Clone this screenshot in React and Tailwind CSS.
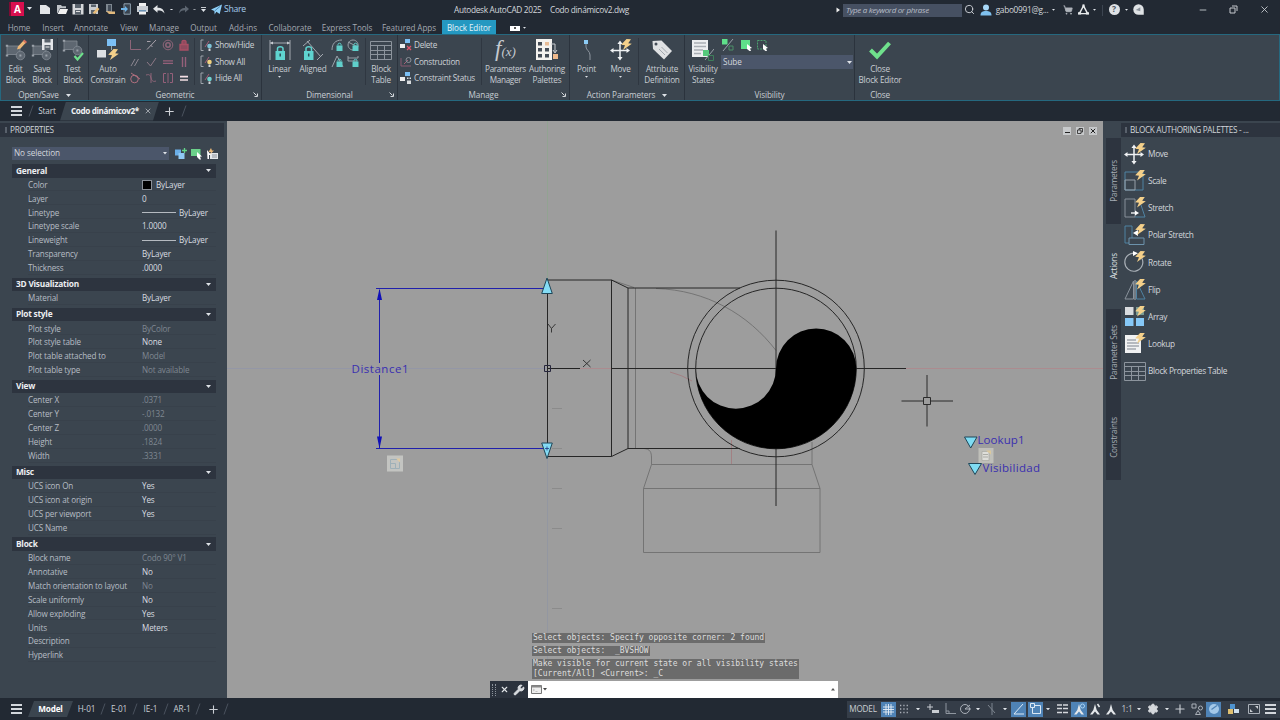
import React from 'react'
import { ShoppingCart, Settings, Search, Wrench, X, Plus, Minus } from 'lucide-react'
import clsx from 'clsx'

const MENU = [
  ["Home", "w-[38px]"],
  ["Insert", "w-[30px]"],
  ["Annotate", "w-[46px]"],
  ["View", "w-[30px]"],
  ["Manage", "w-[40px]"],
  ["Output", "w-[39px]"],
  ["Add-ins", "w-[40px]"],
  ["Collaborate", "w-[54px]"],
  ["Express Tools", "w-[60px]"],
  ["Featured Apps", "w-[64px]"],
];

const SECTIONS = [
  { title: "General", rows: [
    ["Color", "ByLayer", "color"], ["Layer", "0"], ["Linetype", "ByLayer", "line"],
    ["Linetype scale", "1.0000"], ["Lineweight", "ByLayer", "line"],
    ["Transparency", "ByLayer"], ["Thickness", ".0000"],
  ]},
  { title: "3D Visualization", rows: [["Material", "ByLayer"]] },
  { title: "Plot style", rows: [
    ["Plot style", "ByColor", "off"], ["Plot style table", "None"],
    ["Plot table attached to", "Model", "off"], ["Plot table type", "Not available", "off"],
  ]},
  { title: "View", rows: [
    ["Center X", ".0371", "off"], ["Center Y", "-.0132", "off"], ["Center Z", ".0000", "off"],
    ["Height", ".1824", "off"], ["Width", ".3331", "off"],
  ]},
  { title: "Misc", rows: [
    ["UCS icon On", "Yes"], ["UCS icon at origin", "Yes"], ["UCS per viewport", "Yes"], ["UCS Name", ""],
  ]},
  { title: "Block", rows: [
    ["Block name", "Codo 90° V1", "off"], ["Annotative", "No"], ["Match orientation to layout", "No", "off"],
    ["Scale uniformly", "No"], ["Allow exploding", "Yes"], ["Units", "Meters"],
    ["Description", ""], ["Hyperlink", ""],
  ]},
];

// ---------- small helpers ----------
const Cell = ({ className, children }) => (
  <div className={clsx("flex h-full shrink-0 items-center justify-center", className)}>{children}</div>
)

const Arrow = ({ className = "w-[5px]" }) => (
  <svg viewBox="0 0 6 3.6" className={clsx("shrink-0 fill-[#dfe3e8]", className)}><path d="M0 0h6L3 3.6z" /></svg>
)

const Svg = ({ s = 22, v = 22, className, children }) => (
  <svg width={s} height={s} viewBox={`0 0 ${v} ${v}`} className={clsx("shrink-0", className)} fill="none">{children}</svg>
)

const Slash = () => (
  <svg width="6" height="12" viewBox="0 0 6 12" className="shrink-0"><path d="M1 11.5L5 .5" stroke="#4a525e" /></svg>
)

const Burger = ({ className = "w-[11px]" }) => (
  <div className={clsx("flex flex-col gap-[2.5px]", className)}>
    <div className="h-[1.4px] bg-[#d3d7dc]" /><div className="h-[1.4px] bg-[#d3d7dc]" /><div className="h-[1.4px] bg-[#d3d7dc]" />
  </div>
)

const Bolt = ({ x = 0, y = 0 }) => (
  <path transform={`translate(${x} ${y})`} d="M5.5 0L.2 5.8L4 6.200L2 11L10.800 4.800L7.200 4.200L10 .2Z" fill="#f4d08a" />
)

// ---------- title bar ----------
const TitleBar = () => (
  <div className="flex h-[20px] items-center bg-[#222933] text-[#d3d7dc]">
    <Cell className="w-[36px] gap-[3px] pb-[3px] pl-[5px]">
      <div className="flex h-[14px] w-[15px] items-center justify-center border-l-2 border-[#7d0c34] bg-[#d80f4e] text-[10px] font-bold leading-none text-white">A</div>
      <Arrow className="w-[5px]" />
    </Cell>
    <Cell className="w-[18px] pb-[3px]">
      <Svg s={12} v={12}><path d="M1 2h6l4 3v6H1z" fill="#e3e5e8" /></Svg>
    </Cell>
    <Cell className="w-[16px] pb-[3px]">
      <Svg s={12} v={12}><path d="M1 2h4l1 1.3h4v2H4L1.6 10H1z" fill="#bfc3c8" /><path d="M4 6h8l-2 5H1.6z" fill="#f1f1f1" /></Svg>
    </Cell>
    <Cell className="w-[16px] pb-[3px]">
      <Svg s={12} v={12}><path d="M.5 1h11v10.500H.5z" fill="#d6d8db" /><path d="M3 1h6v4H3zM3 7h6v4.500H3z" fill="#59626c" /><path d="M4 8.500h4" stroke="#ddd" /></Svg>
    </Cell>
    <Cell className="w-[16px] pb-[3px]">
      <Svg s={12} v={12}><path d="M1 1h9v10H1z" fill="#c9ccd0" /><path d="M3 1.5h5v2.6H3zM3 7h5v4H3z" fill="#59626c" /><path d="M4.5 10L9.5 4.5l2 1.6L7 11z" fill="#e9bd79" /></Svg>
    </Cell>
    <Cell className="w-[16px] pb-[3px]">
      <Svg s={12} v={12}><path d="M2 1h6v8H2z" fill="#7e8790" /><path d="M4 2h3v6H4z" fill="#444d59" /><path d="M2 8l5 .5h4V11H5z" fill="#e2b97c" /></Svg>
    </Cell>
    <Cell className="w-[16px] pb-[3px]">
      <Svg s={12} v={12}><path d="M4 .8h6.4v10.4H4z" stroke="#8fa0ae" fill="#39434f" /><path d="M1 5h4V3l3 3-3 3V7H1z" fill="#6fb4e8" /></Svg>
    </Cell>
    <Cell className="w-[17px] pb-[3px]">
      <Svg s={13} v={13}><path d="M3 1h7v3H3zM3 9h7v3.4H3z" fill="#f1f1f1" /><path d="M1 4h11v6H1z" fill="#c9ced4" /><path d="M3 8h7v1.4H3z" fill="#6b93b5" /></Svg>
    </Cell>
    <Cell className="w-[15px] pb-px">
      <Svg s={12} v={12}><path d="M0 4.800L4.500 1V3.700c4 0 6.500 1.700 7 5.900C9.800 7 8 6.500 4.500 6.500V8.800z" fill="#e1e4e7" /></Svg>
    </Cell>
    <Cell className="w-[10px] pb-px"><Arrow className="w-[3px]" /></Cell>
    <Cell className="w-[15px] pb-px">
      <Svg s={12} v={12}><path d="M11 5L7 1.600V4C3.500 4 1.500 5.400 1 9.600C2.400 7 4 6.300 7 6.300V8.500z" fill="#5c6570" /></Svg>
    </Cell>
    <Cell className="w-[7px] pb-px"><Arrow className="w-[3px] opacity-60" /></Cell>
    <Cell className="w-[11px] flex-col gap-px pb-px">
      <div className="h-px w-[5px] bg-[#c6cace]" /><Arrow />
    </Cell>
    <Cell className="w-[15px] pb-px">
      <Svg s={11} v={12}><path d="M0 6L12 .5L9.500 11L5.800 8.500L4 11.500L3.600 7.600z" fill="#8fd0f7" /><path d="M4 7.600L10 2.500" stroke="#2c5e86" strokeWidth=".7" /></Svg>
    </Cell>
    <Cell className="w-[22px] text-[8.700px] tracking-[-0.3px] text-[#a5cdee]">Share</Cell>
    <div className="w-[208px]" />
    <div className="w-[96px] whitespace-nowrap text-[8.300px] tracking-[-0.33px]">Autodesk AutoCAD 2025</div>
    <div className="w-[80px] whitespace-nowrap text-[8.300px] tracking-[-0.32px]">Codo dinámicov2.dwg</div>
    <div className="w-[205px]" />
    <Cell className="w-[6px]"><Svg s={6} v={6}><path d="M1.500 .5v5L5 3z" fill="#eee" /></Svg></Cell>
    <div className="w-[2px]" />
    <div className="flex h-[13px] w-[119px] items-center bg-[#465062] pl-[3px] text-[8px] italic tracking-[-0.33px] text-[#b9bec7]">Type a keyword or phrase</div>
    <Cell className="w-[15px] pb-px"><Search size={11} strokeWidth={2} /></Cell>
    <Cell className="w-[18px] pb-px">
      <Svg s={12} v={12}><circle cx="6" cy="3.600" r="3" fill="#a8d8f8" /><path d="M.5 11.500C.5 8 2.500 7 6 7s5.500 1 5.500 4.500z" fill="#7fc0ee" /></Svg>
    </Cell>
    <Cell className="w-[54px] whitespace-nowrap text-[8.300px] tracking-[-0.3px]">gabo0991@g...</Cell>
    <Cell className="w-[9px]"><Arrow className="w-[3px]" /></Cell>
    <Cell className="w-[19px]"><ShoppingCart size={10} fill="#aeb3ba" color="#aeb3ba" /></Cell>
    <Cell className="w-[13px] pb-px">
      <Svg s={11} v={12}><path d="M6 2L1.500 10.500h9z" stroke="#e8eaec" strokeWidth="1.500" /><path d="M4.800 .6h2.400v3H4.800zM0 9h3.400v2.400H0zM8.600 9H12v2.400H8.600z" fill="#e8eaec" /></Svg>
    </Cell>
    <Cell className="w-[9px]"><Arrow className="w-[3px]" /></Cell>
    <Cell className="w-[7px]"><div className="h-[11px] w-px bg-[#3c4450]" /></Cell>
    <Cell className="w-[16px] pb-px">
      <div className="flex size-[11px] items-center justify-center rounded-full bg-[#dfe2e5] text-[8.500px] font-bold leading-none text-[#4c5560]">?</div>
    </Cell>
    <Cell className="w-[8px]"><Arrow className="w-[3px]" /></Cell>
    <Cell className="w-[16px] pb-px">
      <Svg s={11} v={12}><path d="M6 .3a5.700 5.700 0 0 1 5.700 5.700V11.700H6A5.700 5.700 0 0 1 6 .3z" fill="#dfe2e5" /><path d="M3 6.500L8 3.500V8z" fill="#8a929b" /></Svg>
    </Cell>
    <div className="w-[50px]" />
    <Cell className="w-[14px] pb-px"><Minus size={10} /></Cell>
    <Cell className="ml-[16px] w-[14px] pb-px">
      <Svg s={9} v={9}><path d="M1 3h5v5H1z" stroke="#c5c9ce" /><path d="M3 1h5v5" stroke="#c5c9ce" /></Svg>
    </Cell>
    <Cell className="ml-[16px] w-[16px] pb-px"><X size={11} strokeWidth={1.800} /></Cell>
  </div>
)

const MenuTabs = () => (
  <div className="flex h-[14px] items-center bg-[#222933] text-[8.100px] tracking-[-0.07px] text-[#a3a8b0]">
    {MENU.map(([name, w]) => <Cell key={name} className={clsx(w, "whitespace-nowrap pt-[3px]")}>{name}</Cell>)}
    <div className="w-[1px]" />
    <Cell className="w-[54px] whitespace-nowrap bg-[#2498c1] pt-[2px] text-[#e5f3f9]">Block Editor</Cell>
    <div className="ml-[14px] flex items-center gap-[3px] pt-[2px]">
      <div className="flex h-[5px] w-[10px] items-center justify-center bg-white"><div className="size-[2px] bg-[#555]" /></div>
      <Arrow className="w-[3px]" />
    </div>
  </div>
)

// ---------- ribbon ----------
const Panel = ({ className, title, arrow, corner, children }) => (
  <div className={clsx("flex shrink-0 flex-col border-r border-[#2b333d] pt-px", className)}>
    <div className="flex h-[53px] items-start">{children}</div>
    <div className="relative flex h-[11px] items-center justify-center gap-[7px] pt-px text-[8.200px] tracking-[-0.12px] text-[#c8cdd3]">
      {title}
      {arrow && <Arrow className="w-[5px]" />}
      {corner && (
        <Svg s={5} v={5} className="absolute right-[3px] top-[3px]"><path d="M.5 .5l3 3M4.500 1.500v3h-3" stroke="#d5d8dc" /></Svg>
      )}
    </div>
  </div>
)

const Big = ({ className, icon, lines, arrow }) => (
  <div className={clsx("flex shrink-0 flex-col items-center pt-[3px] text-[8.200px] leading-[10.800px] tracking-[-0.2px] text-[#c8cdd3]", className)}>
    {icon}
    <div className="mt-[3px] text-center">
      {lines.map((l) => <div key={l} className="whitespace-nowrap">{l}</div>)}
    </div>
    {arrow && <Arrow className="mt-[1px] w-[3px]" />}
  </div>
)

const Sep = () => <div className="mt-[2px] h-[47px] w-px shrink-0 bg-[#2f3741]" />

const SmallRow = ({ icon, text }) => (
  <div className="flex h-[16.500px] items-center gap-[2px] whitespace-nowrap text-[8.200px] tracking-[-0.28px] text-[#cdd1d7]">{icon}{text}</div>
)

const BlockBase = ({ y = 0 }) => (
  <g transform={`translate(0 ${y})`}>
    <path d="M2 3h13v8.500H2z" fill="#5e6771" stroke="#858d96" strokeWidth=".8" />
    <circle cx="15.500" cy="12.500" r="4.300" fill="#5e6771" stroke="#858d96" strokeWidth=".8" />
    <path d="M.8 11.500h2.400v2H.8zM.8 1.800h2.400v2H.8zM14.400 11.500h2v2h-2z" fill="#9aa1a9" />
  </g>
)

const Grid = () => (
  <Svg><path d="M.5 2.500h21v18H.5zM.5 6.500h21M.5 11.500h21M.5 15.500h21M7.500 6.500v14M14.500 6.500v14" stroke="#8c949d" strokeWidth="1" /></Svg>
)

const MoveIcon = () => (
  <Svg>
    <path d="M10 4v15M2.500 11.500h15" stroke="#f0f2f4" strokeWidth="1.500" />
    <path d="M10 1.500l2.600 3.500H7.400zM10 21.500l2.600-3.500H7.400zM0 11.500L3.500 9v5zM20 11.500L16.500 9v5z" fill="#f0f2f4" />
    <Bolt x={11} y={0} />
  </Svg>
)

const geoIcons = [
  <path d="M1.500 1v9.500H12" stroke="#8d6578" />,
  <path d="M2 10.500L11 1M2 2.500h3.500M5.500 6l2 2" stroke="#a9a2ab" />,
  <g stroke="#8d6578"><circle cx="6" cy="6" r="4.800" /><circle cx="6" cy="6" r="2.200" strokeWidth="1.500" /></g>,
  <path d="M2 5.500h8V11H2zM4 5.500V2.600C4 1 8 1 8 2.600v3" stroke="#a84f64" strokeWidth="1.300" fill="#8f4a5e" />,
  <path d="M2 10l4-7M5.500 10l4-7" stroke="#8d8791" />,
  <path d="M2 6l3.500 4L11 2" stroke="#8d7886" />,
  <path d="M1 4.800h10M1 7.400h10" stroke="#95607a" strokeWidth="1.200" />,
  <path d="M4.500 1v10M7.500 1v10" stroke="#95607a" strokeWidth="1.400" />,
  <g stroke="#b06f7e"><circle cx="5.500" cy="7" r="3.800" /><path d="M2 1l9 6" /></g>,
  <path d="M1 3c4-1 4 0 5 3s2 4 5 3M6 1v10" stroke="#8d6578" />,
  <path d="M4 1.500H1.500v9H4M8 1.500h2.500v9H8M6 1v10" stroke="#95607a" />,
  <path d="M2 4.600h8M2 8h8" stroke="#f3dfe5" strokeWidth="1.700" />,
];

const ShowIcon = ({ c }) => (
  <Svg s={13} v={13}>
    <path d="M3.500 1H1v10.500h2.500" stroke="#a0a6ad" /><path d="M5 8l4-6" stroke="#a65f78" />
    <circle cx="9.500" cy="7" r="2.300" fill={c} /><path d="M8.500 9.500h2v2.500h-2z" fill="#d3d6da" />
  </Svg>
)

const DimLock = ({ d }) => (
  <Svg s={13} v={13}>
    <path d={d} stroke="#9aa1a9" />
    <path d="M5.500 6.500h6V12h-6z" fill="#5fcfcb" /><path d="M7 6.500V5.200c0-1.300 3-1.300 3 0v1.300" stroke="#5fcfcb" />
  </Svg>
)

const Ribbon = () => (
  <div className="flex h-[67px] border border-[#25687f] bg-[#3b454f]">
    <Panel className="w-[88px]" title="Open/Save" arrow>
      <Big className="w-[29px]" lines={["Edit", "Block"]} icon={
        <Svg><BlockBase y={4} /><path d="M12 10.500L13 7.500L18.500 1.500L21 3.500L15.500 9.500z" fill="#eeb878" /><path d="M18 2l1.400-1.400L22 3l-1.400 1.400z" fill="#d6705c" /></Svg>
      } />
      <Big className="w-[24px]" lines={["Save", "Block"]} icon={
        <Svg><BlockBase y={4} /><path d="M11 0h11v11H11z" fill="#e4e6e9" /><path d="M13.500 0h6v3.500h-6zM13.500 6h6v5h-6z" fill="#59626c" /><path d="M14.500 8h4" stroke="#eee" /></Svg>
      } />
      <div className="w-[4px]" />
      <Sep />
      <Big className="w-[30px]" lines={["Test", "Block"]} icon={
        <Svg><BlockBase y={-1} /><path d="M12.500 17l3 3.500L21 14" stroke="#6fe08c" strokeWidth="2.200" /></Svg>
      } />
    </Panel>
    <Panel className="w-[173px]" title="Geometric" corner>
      <Big className="w-[38px]" lines={["Auto", "Constrain"]} icon={
        <Svg><path d="M10 0h9v7h-9z" fill="#7cc0f5" /><path d="M0 11h9v7.500H0z" fill="#dcdfe2" /><Bolt x={11} y={10} /><path d="M14.500 7v4" stroke="#9aa" /></Svg>
      } />
      <div className="grid w-[65px] grid-cols-4 pt-[1px]">
        {geoIcons.map((g, i) => (
          <div key={i} className="flex h-[16.500px] items-center justify-center"><Svg s={12} v={12}>{g}</Svg></div>
        ))}
      </div>
      <div className="w-[2px]" />
      <Sep />
      <div className="flex flex-col pl-[5px] pt-[1px]">
        <SmallRow icon={<ShowIcon c="#7fc5d8" />} text="Show/Hide" />
        <SmallRow icon={<ShowIcon c="#f0d27f" />} text="Show All" />
        <SmallRow icon={<ShowIcon c="#6fd3d0" />} text="Hide All" />
      </div>
    </Panel>
    <Panel className="w-[136px]" title="Dimensional" corner>
      <Big className="w-[35px]" arrow lines={["Linear"]} icon={
        <Svg>
          <path d="M1 1v20M21 1v20M1 4h20" stroke="#a3a9b0" /><path d="M1 4l3-1.500v3zM21 4l-3-1.500v3z" fill="#c9cdd2" />
          <path d="M6.500 12h9.500v9H6.500z" fill="#5fd3cf" /><path d="M8.500 12V9.500c0-2.500 5.500-2.500 5.500 0V12" stroke="#5fd3cf" strokeWidth="1.500" /><path d="M11.200 14.500v3" stroke="#2b4b54" strokeWidth="1.500" />
        </Svg>
      } />
      <Big className="w-[32px]" lines={["Aligned"]} icon={
        <Svg>
          <path d="M1 7l7-6M5 2l14 16M15 21l6-6" stroke="#a3a9b0" />
          <path d="M2 12h9.500v9H2z" fill="#5fd3cf" /><path d="M4 12V9.500c0-2.500 5.500-2.500 5.500 0V12" stroke="#5fd3cf" strokeWidth="1.500" /><path d="M6.700 14.500v3" stroke="#2b4b54" strokeWidth="1.500" />
        </Svg>
      } />
      <div className="grid w-[32px] grid-cols-2 justify-items-center gap-y-[3px] pl-[1px] pt-[3px]">
        <DimLock d="M1 11C1 5 4 1 11 1" />
        <DimLock d="M6 1a5 5 0 1 0 .1 0M1 3l10 5" />
        <DimLock d="M1 12L6 1l6 11" />
        <DimLock d="M1 3h10V1M1 1v5h9" />
      </div>
      <div className="w-[4px]" />
      <Sep />
      <Big className="w-[30px]" lines={["Block", "Table"]} icon={<Grid />} />
    </Panel>
    <Panel className="w-[172px]" title="Manage" corner>
      <div className="flex w-[83px] flex-col pl-[2px] pt-[1px]">
        <SmallRow text="Delete" icon={<Svg s={12} v={12}><path d="M5 0h5v4H5z" fill="#7cc0f5" /><path d="M0 5h5v4H0z" fill="#eee" /><path d="M7 7l4 4M11 7l-4 4" stroke="#e0566c" strokeWidth="1.300" /></Svg>} />
        <SmallRow text="Construction" icon={<Svg s={12} v={12}><path d="M1 2v8h10" stroke="#8a5a70" /><path d="M4 8l4-4" stroke="#a65f78" /><circle cx="8.500" cy="4" r="2.500" stroke="#8b9199" /></Svg>} />
        <SmallRow text="Constraint Status" icon={<Svg s={12} v={12}><path d="M5 0h5v4H5z" fill="#7cc0f5" /><path d="M0 5h5v4H0z" fill="#eee" /><path d="M7 5.500h1.500V7H7zM9.500 5.500H11V7H9.500zM7 8.500h4V12H7z" fill="#d8dbde" /></Svg>} />
      </div>
      <Sep />
      <Big className="w-[47px] tracking-[-0.35px]" lines={["Parameters", "Manager"]} icon={
        <div className="h-[22px] whitespace-nowrap font-['Liberation_Serif',serif] text-[23px] italic leading-[20px] tracking-normal text-[#c6cad0]">f<span className="text-[13px]">(x)</span></div>
      } />
      <Big className="w-[36px]" lines={["Authoring", "Palettes"]} icon={
        <Svg>
          <path d="M0 0h16v21H0z" fill="#f4f2ef" />
          <path d="M2 3h4v3.500H2zM2 9h4v3.500H2zM2 15h4v3.500H2zM9 9h4v3.500H9zM9 15h4v3.500H9z" fill="#454d57" />
          <path d="M9 3h4v3.500H9z" fill="#e8bc96" /><path d="M15 5h4v8M17 11l2 3 2-3" stroke="#c9ccd0" /><path d="M17 15h5v5h-5z" fill="#efb98c" />
        </Svg>
      } />
    </Panel>
    <Panel className="w-[115px]" title="Action Parameters" arrow>
      <Big className="w-[33px]" arrow lines={["Point"]} icon={
        <Svg><path d="M8 1h4v4H8z" fill="#8ccbf5" /><path d="M10 5v3c0 3 4 4 4 8v5" stroke="#8e969f" /></Svg>
      } />
      <Big className="w-[35px]" arrow lines={["Move"]} icon={<MoveIcon />} />
      <div className="w-[2px]" />
      <Sep />
      <Big className="w-[46px]" lines={["Attribute", "Definition"]} icon={
        <Svg>
          <path d="M1.500 2l9-.5L21 12l-8 8.500L2 10z" fill="#dfe1e3" /><circle cx="5" cy="5" r="1.500" fill="#444d58" />
          <path d="M8 10l6 6M10.500 8l6 6" stroke="#a2a8ae" />
        </Svg>
      } />
    </Panel>
    <Panel className="w-[170px]" title="Visibility">
      <Big className="w-[36px]" lines={["Visibility", "States"]} icon={
        <Svg>
          <path d="M0 1h16v17H0z" fill="#eceef0" /><path d="M2 4h12M2 7.500h12M2 11h9M2 14.500h7" stroke="#a9aeb4" strokeWidth="1.300" />
          <path d="M11 11h6v6h-6z" fill="#55c97c" /><path d="M13 21L22 10" stroke="#9aa1a9" /><path d="M16.500 16.500h5v5h-5z" stroke="#3e7e5a" />
        </Svg>
      } />
      <div className="flex flex-col gap-[4px] pt-[3px]">
        <div className="flex gap-[6px] pl-[1px]">
          <Svg s={12} v={12}><path d="M0 0h5.500v5.500H0z" fill="#5fe08a" /><path d="M1 12L11 0" stroke="#9aa1a9" /><path d="M7 7h4v4H7z" stroke="#4d8f68" /></Svg>
          <Svg s={12} v={12}><path d="M1 1h9v9H1z" fill="#5fe08a" /><path d="M7 5l5 4-2 .5L11 12H9.500L7 10z" fill="#fff" /></Svg>
          <Svg s={12} v={12} className="-ml-[2px]"><path d="M1.500 1.500h8.500v8.500H1.500z" stroke="#4da070" strokeDasharray="2 1" /><path d="M7 5l5 4-2 .5L11 12H9.500L7 10z" fill="#fff" /></Svg>
        </div>
        <div className="flex h-[14px] w-[132px] items-center justify-between bg-[#4b566a] pl-[2px] pr-px text-[8.200px] tracking-[-0.1px] text-[#d3d7dd]">Sube<Arrow /></div>
      </div>
    </Panel>
    <div className="flex w-[50px] flex-col items-center pt-px">
      <Big className="h-[53px]" lines={["Close", "Block Editor"]} icon={<Svg><path d="M1.500 11l6.500 6.500L20.500 4" stroke="#6fe08c" strokeWidth="4" /></Svg>} />
      <div className="flex h-[11px] items-center pt-px text-[8.200px] tracking-[-0.2px] text-[#c8cdd3]">Close</div>
    </div>
  </div>
)

const FileTabs = () => (
  <div className="flex h-[20px] items-center bg-[#222933] text-[8.200px] text-[#cfd3d8]">
    <Cell className="w-[27px] pl-[5px]"><Burger /></Cell>
    <Cell className="w-[7px]"><Slash /></Cell>
    <Cell className="w-[26px] tracking-[-0.15px]">Start</Cell>
    <div className="flex h-[19px] w-[99px] items-center bg-[#3b454f] pl-[11px] [clip-path:polygon(6px_0,100%_0,93px_100%,0_100%)]">
      <div className="w-[73px] whitespace-nowrap font-bold tracking-[-0.4px] text-[#f0f2f4]">Codo dinámicov2*</div>
      <X size={8} />
    </div>
    <Cell className="w-[21px]"><Plus size={13} /></Cell>
    <Cell className="w-[7px]"><Slash /></Cell>
  </div>
)

// ---------- properties palette ----------
const Row = ({ name, value, kind }) => (
  <div className="flex h-[13.900px] items-center border-b border-[#38414b] pt-[1.500px] text-[8.100px] tracking-[-0.14px]">
    <div className="w-[114px] whitespace-nowrap text-[#b7bdc5]">{name}</div>
    <div className={clsx("flex items-center whitespace-nowrap", kind === "off" ? "text-[#7f8791]" : "text-[#d9dce0]")}>
      {kind === "color" && <div className="mr-[4px] size-[10px] border border-[#8b9199] bg-black" />}
      {kind === "line" && <div className="mr-[3px] h-px w-[34px] bg-[#b5bac0]" />}
      {value}
    </div>
  </div>
)

const Properties = () => (
  <div className="flex w-[227px] shrink-0 flex-col bg-[#3b454f] pr-[3px] pt-[2px]">
    <div className="flex h-[14px] items-center gap-[3px] bg-[#2d343f] pl-[5px] text-[8.200px] tracking-[-0.3px] text-[#d0d4d9]">
      <div className="h-[6px] w-[2px] bg-[#59616c]" />PROPERTIES
    </div>
    <div className="mt-[10px] flex h-[13px] items-center pl-[12px]">
      <div className="flex h-full w-[157px] items-center justify-between bg-[#4b566a] pl-[2px] pr-[2px] text-[8.200px] tracking-[-0.1px] text-[#d3d7dd]">No selection<Arrow className="w-[4px]" /></div>
      <div className="flex gap-[4px] pl-[6px]">
        <Svg s={12} v={12}><path d="M0 1.500h6v6H0z" fill="#6aaee6" /><path d="M3.500 5h6v6h-6z" fill="#90caf5" /><path d="M9.500 0v5M7 2.500h5" stroke="#63d489" strokeWidth="1.300" /></Svg>
        <Svg s={12} v={12}><path d="M0 1h9.500v7H0z" fill="#6bd18a" /><path d="M6 4l5 4.500-2 .3 1 2.700H8.500L6 9z" fill="#fff" /></Svg>
        <Svg s={12} v={12} className="-ml-px"><path d="M4 5h8v6H4z" fill="#e4e7ea" /><path d="M1 2l4 5-2 0v4H1.500z" fill="#fff" /><path d="M5 0L2.500 4H5L4 6.500 8 2.500H6z" fill="#e9b878" /><path d="M6 7h5M6 9h5" stroke="#777f88" strokeWidth=".8" /></Svg>
      </div>
    </div>
    <div className="pl-[12px] pr-[8px] pt-[4px]">
      {SECTIONS.map((s) => (
        <div key={s.title} className="mb-[2.750px]">
          <div className="flex h-[13.600px] items-center justify-between bg-[#2d343f] pl-[4px] pr-[5px] text-[8.300px] font-bold tracking-[-0.22px] text-[#eceef1]">
            {s.title}<Arrow />
          </div>
          <div className="pl-[16px]">
            {s.rows.map(([n, v, k]) => <Row key={n} name={n} value={v} kind={k} />)}
          </div>
        </div>
      ))}
    </div>
  </div>
)

// ---------- drawing ----------
const Grip = ({ x, y, up }) => (
  <path d={up ? `M${x} ${y - 8}l5.300 15.500h-10.600z` : `M${x} ${y + 8}l5.300-15.500h-10.600z`} fill="#84dcf5" stroke="#1f4658" />
)

const Drawing = () => (
  <svg width="876" height="577" viewBox="227 121 876 577" className="block" fill="none">
    {/* axes */}
    <path d="M547.500 121V280" stroke="#8fa58f" strokeWidth=".8" />
    <path d="M547.500 456V698" stroke="#9095a2" strokeWidth=".8" />
    <path d="M227 368.500H547" stroke="#9296a8" strokeWidth=".8" />
    <path d="M547 368.500H1103" stroke="#b0868b" strokeWidth=".8" />
    <path d="M552 408.500h10M552 448.500h10M552 488.500h10M552 528.500h10M552 608.500h10" stroke="#878787" strokeWidth=".8" />

    {/* lower elbow, other visibility state */}
    <g stroke="#6f6f6f" strokeWidth=".9">
      <path d="M635.500 288V448M643.500 488.500H820V552.500H643.500zM651.500 464.500H812L820 488.500M651.500 464.500L643.500 488.500M644 448.500C650 449 651.500 452 651.500 458V464.500M812 442V464.500" />
      <path d="M611.500 280L634 287.500M656 288.500C706 290 748 314 776 350.500" />
    </g>
    <path d="M731.500 440V464M670 372q12 3 22 9" stroke="#a3787c" strokeWidth=".8" />

    {/* pipe body */}
    <g stroke="#262626">
      <path d="M547.500 280H611.500V456.500H547.500zM611.500 280L628 288H740M611.500 456.500L628 448.500H740M628 288V448.500" />
      <path d="M611.500 368.500H906M776 230.500V506" />
      <circle cx="776" cy="368.500" r="88.300" />
      <circle cx="776" cy="368.500" r="80.300" />
    </g>
    <path d="M695.700 368.500A80.300 80.300 0 0 0 856.300 368.500A40.150 40.150 0 0 0 776 368.500A40.150 40.150 0 0 1 695.700 368.500z" fill="#000" />

    {/* ucs icon */}
    <path d="M547.500 336V368.500H580" stroke="#222" />
    <path d="M544.500 365.500h6v6h-6z" stroke="#26263c" />
    <path d="M583 360l7.500 7M590.500 360l-7.500 7M548 324l3.500 4.500M555.500 324l-4 4.500v4" stroke="#2b2b2b" strokeWidth=".9" />

    {/* linear parameter */}
    <path d="M376 288.500H547M376 448.500H547M379.500 290V363M379.500 375V448" stroke="#2020ac" />
    <path d="M379.500 288.500l2.500 11.500h-5zM379.500 448.500l2.500-12h-5z" fill="#0f0fb8" />
    <Grip x={547} y={286} up />
    <Grip x={547} y={450.500} />
    <path d="M547 446.500v4M545 448.500h4" stroke="#1d3a80" strokeWidth=".8" />

    <g fill="#3a2fb0" className="font-['Open_Sans']" fontSize="11.500">
      <text x="351.500" y="372.500" textLength="57">Distance1</text>
      <text x="977.500" y="444" textLength="47">Lookup1</text>
      <text x="982.500" y="471.500" textLength="57.500">Visibilidad</text>
    </g>

    {/* action badges */}
    <path d="M387 455.500h16v16h-16z" fill="#c3c4c1" />
    <path d="M390.500 459.500h9v9h-9zM390.500 463.500h5v5" stroke="#9fb0b8" /><path d="M396 458.500h4v4z" fill="#e0c9a0" />
    <path d="M978.500 448h15v15h-15z" fill="#bfbfb9" />
    <path d="M982 451.500h7v9h-7z" fill="#deded9" stroke="#a8a8a2" strokeWidth=".7" /><path d="M983 454.500h5M983 457h5" stroke="#96968f" strokeWidth=".7" /><path d="M986 450.500h5v4z" fill="#dcc89c" />

    <path d="M964.500 437H977L970.700 448zM968.500 463.500H981.500L975 474.500z" fill="#7fdcf3" stroke="#1f4658" />

    {/* crosshair */}
    <path d="M901.500 401H924M931 401h22M927 375V397.500M927 404.500V426.500M923.500 397.500h7v7h-7z" stroke="#2b2b2b" />
  </svg>
)

const CommandLine = () => (
  <div className="absolute bottom-0 left-[263px] w-[348px]">
    <div className="flex flex-col items-start pl-[42px] font-['DejaVu_Sans_Mono',monospace] text-[8px] leading-[10px] text-[#dedede]">
      <div className="mb-[3px] h-[10px] whitespace-pre bg-[#6b6b6b] px-[1px]">Select objects: Specify opposite corner: 2 found</div>
      <div className="mb-[3px] h-[10px] whitespace-pre bg-[#6b6b6b] px-[1px]">Select objects:  _BVSHOW</div>
      <div className="mb-[2px] h-[20px] whitespace-pre bg-[#6b6b6b] px-[1px]">{"Make visible for current state or all visibility states\n[Current/All] <Current>: _C"}</div>
    </div>
    <div className="flex h-[17px] items-center bg-white">
      <div className="flex h-full w-[38px] items-center gap-[4px] bg-[#2b323d] pl-[2px] text-[#e3e6e9]">
        <div className="h-[12px] w-[4px] border-x border-dotted border-[#8c939c]" />
        <X size={9} strokeWidth={3} />
        <Wrench size={12} fill="#d8dbdf" strokeWidth={1.500} />
      </div>
      <Svg s={11} v={11} className="ml-[3px]"><path d="M.5 1.500h10v8H.5z" fill="#eee" stroke="#777" /><path d="M.5 1.500h10v2H.5z" fill="#888" /><path d="M2 5l1.500 1L2 7M4.500 7.500h2" stroke="#999" strokeWidth=".5" /></Svg>
      <svg viewBox="0 0 6 3.600" className="ml-px w-[4px]"><path d="M0 0h6L3 3.600z" fill="#444" /></svg>
      <svg viewBox="0 0 6 3.600" className="ml-auto mr-[3px] w-[4px]"><path d="M0 3.600h6L3 0z" fill="#555" /></svg>
    </div>
  </div>
)

const Canvas = () => (
  <div className="relative w-[876px] shrink-0 bg-[#9d9d9d]">
    <Drawing />
    <div className="absolute right-[6px] top-[6px] flex items-center gap-[5px]">
      <div className="flex size-[8px] items-end justify-center bg-[#c7c9cb] pb-[2px]"><div className="h-px w-[5px] bg-[#222]" /></div>
      <Svg s={8} v={8}><path d="M0 0h8v8H0z" fill="#c7c9cb" /><path d="M1.500 3h3.500v3.500H1.500zM3 3V1.500h3.500V5H5" stroke="#222" strokeWidth=".8" /></Svg>
      <Svg s={8} v={8}><path d="M0 0h8v8H0z" fill="#c7c9cb" /><path d="M1.800 1.800l4.400 4.400M6.200 1.800L1.800 6.200" stroke="#222" /></Svg>
    </div>
    <CommandLine />
  </div>
)

// ---------- authoring palettes ----------
const TOOLS = [
  ["Move", <MoveIcon />],
  ["Scale", <Svg><path d="M1 2h18v18H1z" stroke="#4f83a3" /><path d="M1 10h10v10H1z" stroke="#97a0a9" /><Bolt x={11} y={-.5} /></Svg>],
  ["Stretch", <Svg><path d="M1 2h10v18H1z" stroke="#87909a" /><path d="M11 20h10L17 8" stroke="#4f83a3" /><path d="M7 16h5" stroke="#fff" strokeWidth="1.300" /><path d="M11 13.500l4 2.500-4 2.500z" fill="#fff" /><Bolt x={11} y={-.5} /></Svg>],
  ["Polar Stretch", <Svg><path d="M1 2h7v17H1z" stroke="#4f83a3" /><path d="M5 14h15v6.500H5z" stroke="#6c92ab" fill="#3b454f" /><path d="M9 9l5-3v6z" fill="#fff" /><Bolt x={11} y={0} /></Svg>],
  ["Rotate", <Svg><path d="M12 2.500A9 9 0 1 0 18 7.500" stroke="#a9b0b7" strokeWidth="1.200" /><path d="M9 0l5 2.300L9 5z" fill="#fff" /><Bolt x={11} y={0} /></Svg>],
  ["Flip", <Svg><path d="M9.500 2L1 20h8.500z" stroke="#8a939c" /><path d="M12.500 2L21 20h-8.500z" stroke="#4f83a3" /><path d="M11 1v20" stroke="#a9b0b7" /><Bolt x={11} y={-.5} /></Svg>],
  ["Array", <Svg><path d="M1 1h8.500v8H1z" fill="#d9dcdf" /><path d="M12 1h8v8h-8z" fill="#7a9a92" /><path d="M1 12h8.500v8H1zM12 12h8v8h-8z" fill="#86c8f7" /><Bolt x={11} y={-.5} /></Svg>],
  ["Lookup", <Svg><path d="M1 2h16v18H1z" fill="#f0f1f2" /><path d="M3 7h9M3 10h12M3 13h12M3 16h9" stroke="#7a828b" strokeWidth="1.100" /><Bolt x={11} y={-.5} /></Svg>],
  ["Block Properties Table", <Grid />],
];

const SideTab = ({ name, className }) => (
  <div className={clsx("flex w-[15px] items-center justify-center pl-[2px]", className)}>
    <span className="rotate-180 whitespace-nowrap text-[8.200px] leading-none tracking-[-0.27px] [writing-mode:vertical-rl]">{name}</span>
  </div>
)

const Palettes = () => (
  <div className="flex flex-1 bg-[#3b454f] pl-[3px] pt-[2px]">
    <div className="flex flex-col pt-[15px] text-[#a7adb5]">
      <SideTab name="Parameters" className="h-[86px] bg-[#2d343f]" />
      <SideTab name="Actions" className="h-[85px] text-[#dde0e4]" />
      <SideTab name="Parameter Sets" className="h-[86px] bg-[#2d343f]" />
      <SideTab name="Constraints" className="h-[85px] bg-[#2d343f]" />
    </div>
    <div className="flex flex-1 flex-col">
      <div className="flex h-[14px] items-center gap-[3px] whitespace-nowrap bg-[#2d343f] pl-[4px] text-[8.200px] tracking-[-0.32px] text-[#d0d4d9]">
        <div className="h-[6px] w-[2px] bg-[#59616c]" />BLOCK AUTHORING PALETTES - ...
      </div>
      <div className="flex flex-col pl-[3px] pt-[3px]">
        {TOOLS.map(([name, icon]) => (
          <div key={name} className="flex h-[27.200px] items-center gap-[2px] whitespace-nowrap text-[8.300px] tracking-[-0.33px] text-[#d3d7dc]">{icon}<span className="pt-px">{name}</span></div>
        ))}
      </div>
    </div>
  </div>
)

// ---------- status bar ----------
const Person = ({ dot }) => (
  <Svg s={13} v={13}><path d="M6 1l1.700 6L11 11.500H8.500L6 8.500 3.500 11.500H1L4.300 7z" fill="#e4e7ea" />{dot}</Svg>
)

const St = ({ className, on, children }) => (
  <div className={clsx("flex h-[15px] shrink-0 items-center justify-center", on && "bg-[#4f83b6]", className)}>{children}</div>
)

const LAYOUTS = [["H-01", "w-[27px]"], ["E-01", "w-[26px]"], ["IE-1", "w-[25px]"], ["AR-1", "w-[26px]"]];

const StatusBar = () => (
  <div className="flex h-[22px] items-center bg-[#222933] text-[8.200px] tracking-[-0.08px] text-[#c9cdd3]">
    <Cell className="w-[28px] pl-[4px]"><Burger /></Cell>
    <div className="flex h-[16px] w-[45px] items-center justify-center bg-[#3b454f] font-bold tracking-[-0.2px] text-white [clip-path:polygon(6px_0,100%_0,39px_100%,0_100%)]">Model</div>
    {LAYOUTS.map(([l, w]) => (
      <React.Fragment key={l}>
        <Cell className={clsx(w, "whitespace-nowrap")}>{l}</Cell>
        <Cell className="w-[6px]"><Slash /></Cell>
      </React.Fragment>
    ))}
    <Cell className="ml-[2px] w-[20px]"><Plus size={13} /></Cell>
    <Slash />
    <div className="ml-auto flex h-[17px] w-[433px] items-center bg-[#353d48]">
      <St className="w-[32px] tracking-[-0.2px]">MODEL</St>
      <St className="ml-[2px] w-[15px]" on><Svg s={11} v={11}><path d="M3 0v11M5.500 0v11M8 0v11M0 3h11M0 5.500h11M0 8h11" stroke="#e6eef6" strokeWidth=".9" /></Svg></St>
      <St className="w-[16px]"><Svg s={10} v={10}><path d="M1 1.500h9M1 5h9M1 8.500h9" stroke="#aab0b8" strokeWidth="1.300" strokeDasharray="1.300 2" /></Svg></St>
      <St className="w-[11px]"><Arrow className="w-[4px]" /></St>
      <St className="w-[20px]"><Svg s={12} v={12}><path d="M3 1v6M0 4h6" stroke="#c9cdd2" /><path d="M5 7h7v3H5z" fill="#c9cdd2" /></Svg></St>
      <St className="w-[14px]"><Svg s={12} v={12}><path d="M2 0v10.500h10M5 10V8H2" stroke="#8f969f" /></Svg></St>
      <St className="w-[16px]"><Svg s={12} v={12}><circle cx="6" cy="6" r="4.500" stroke="#aab0b8" /><path d="M6 6h6M6 6l5-4" stroke="#aab0b8" /></Svg></St>
      <St className="w-[10px]"><Arrow className="w-[4px]" /></St>
      <St className="w-[17px]"><Svg s={12} v={12}><path d="M2 2l7 8M6 0v12" stroke="#7d858f" /></Svg></St>
      <St className="w-[9px]"><Arrow className="w-[4px]" /></St>
      <St className="ml-[2px] w-[15px]" on><Svg s={12} v={12}><path d="M1 11L10 1M1 11h10" stroke="#dbe8f4" /></Svg></St>
      <St className="ml-[2px] w-[15px]" on><Svg s={12} v={12}><path d="M2.500 2.500h8v8h-8z" stroke="#dbe8f4" /><path d="M.5 .5h4v4h-4z" stroke="#dbe8f4" fill="#4f83b6" /></Svg></St>
      <St className="w-[10px]"><Arrow className="w-[4px]" /></St>
      <St className="w-[18px]"><Svg s={12} v={12}><path d="M1 2h5M7 2h5M1 5.500h5M7 5.500h5M1 9.500h5M7 9.500h5" stroke="#d5d8dc" strokeWidth="1.600" /></Svg></St>
      <St className="w-[16px]" on><Person dot={<circle cx="9.500" cy="3" r="2" stroke="#a9d2f3" />} /></St>
      <St className="w-[17px]"><Person dot={<path d="M8.500 1l2 3" stroke="#e4e7ea" strokeWidth="1.500" />} /></St>
      <St className="w-[15px]"><Person /></St>
      <St className="w-[16px] tracking-[-0.2px]">1:1</St>
      <St className="w-[7px]"><Arrow className="w-[4px]" /></St>
      <St className="w-[21px]"><Settings size={12} fill="#d5d8dc" color="#d5d8dc" strokeWidth={2} /></St>
      <St className="w-[7px]"><Arrow className="w-[4px]" /></St>
      <St className="w-[19px]"><Plus size={14} /></St>
      <St className="w-[16px]"><Svg s={12} v={12}><path d="M1 1h4v4H1zM4.500 11.500l2.500-4 2.500 4z" stroke="#aab0b8" /><circle cx="9.500" cy="5" r="2" stroke="#aab0b8" /></Svg></St>
      <St className="ml-[1px] w-[15px]" on><Svg s={12} v={12}><circle cx="6" cy="6" r="5" fill="#a4c8e8" /><path d="M3.500 6.500L9 2.500" stroke="#4f83b6" strokeWidth="1.300" /></Svg></St>
      <St className="w-[23px]"><Svg s={12} v={12}><path d="M3 1h5v5H3z" fill="#4f93cf" /><path d="M1 6h5v5H1z" fill="#e0c070" /><path d="M7 6h5v4H7z" fill="#cfe0ee" /></Svg></St>
      <St className="w-[19px]"><Svg s={12} v={12}><path d="M.5 1.500h11v9H.5z" stroke="#aab0b8" /><path d="M7 3h3v3zM5 9H2V6z" fill="#c9cdd2" /></Svg></St>
      <St className="w-[15px]"><Burger /></St>
    </div>
  </div>
)

const App = () => {
  return (
    <div className="flex h-[720px] w-[1280px] flex-col overflow-hidden bg-[#222933] font-['Open_Sans','Noto_Sans',sans-serif]">
      <TitleBar />
      <MenuTabs />
      <Ribbon />
      <FileTabs />
      <div className="flex h-[577px]">
        <Properties />
        <Canvas />
        <Palettes />
      </div>
      <StatusBar />
    </div>
  )
}

export default App
